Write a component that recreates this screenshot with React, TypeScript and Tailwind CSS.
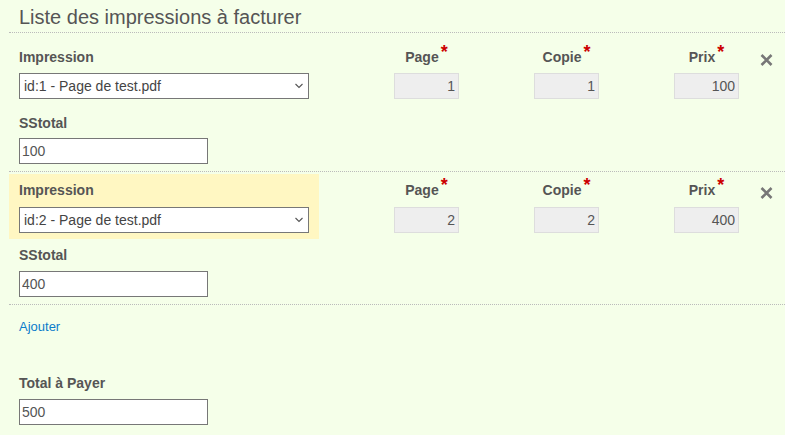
import type { ReactNode } from "react";

type Line = {
  id: number;
  page: number;
  copie: number;
  prix: number;
  highlight?: boolean;
};

const lines: Line[] = [
  { id: 1, page: 1, copie: 1, prix: 100 },
  { id: 2, page: 2, copie: 2, prix: 400, highlight: true },
];

function Label({ children }: { children: ReactNode }) {
  return (
    <div className="h-[18px] text-[14px] font-bold leading-[18px] text-[#555]">
      {children}
    </div>
  );
}

function Required({ label }: { label: string }) {
  return (
    <div className="flex h-[18px] items-start justify-center text-[14px] font-bold leading-[18px] text-[#555]">
      <span>{label}</span>
      <span className="ml-[2px] -mt-[5px] text-[18px] font-bold leading-[18px] text-[#c00]">*</span>
    </div>
  );
}

function TextInput({ value }: { value: string | number }) {
  return (
    <input
      readOnly
      value={value}
      className="block h-[26px] w-[189px] border border-[#777] bg-white px-[2px] text-[14px] text-[#555] outline-none"
    />
  );
}

function NumberCol({ label, value, first }: { label: string; value: number; first: boolean }) {
  return (
    <div className="flex w-[140px] justify-end">
      <div className="w-[65px] pt-[7px]">
        <Required label={label} />
        <input
          readOnly
          value={value}
          className={`block h-[26px] w-[65px] border border-[#ddd] bg-[#eee] px-[3px] text-right text-[14px] text-[#555] outline-none ${first ? "mt-[7px]" : "mt-[8px]"}`}
        />
      </div>
    </div>
  );
}

function Row({ line, first }: { line: Line; first: boolean }) {
  return (
    <div className="ml-[9px] border-b border-dotted border-[#bbb]">
      <div className={`flex items-start ${first ? "pt-[8px]" : "pt-[2px]"}`}>
        <div className={`w-[310px] px-[10px] pt-[7px] pb-[6px] ${line.highlight ? "bg-[#fff7c2]" : ""}`}>
          <Label>Impression</Label>
          <div className={`relative w-[290px] ${first ? "mt-[7px]" : "mt-[8px]"}`}>
            <select
              defaultValue={line.id}
              className="block h-[26px] w-[290px] appearance-none border border-[#777] bg-white pl-[4px] pr-[20px] text-[14px] text-[#444] outline-none"
            >
              <option value={line.id}>id:{line.id} - Page de test.pdf</option>
            </select>
            <svg
              className="pointer-events-none absolute right-[6px] top-[10px]"
              width="8"
              height="6"
              viewBox="0 0 8 6"
              fill="none"
            >
              <path d="M0.5 1 L4 4.5 L7.5 1" stroke="#555" strokeWidth="1.1" />
            </svg>
          </div>
        </div>
        <NumberCol label="Page" value={line.page} first={first} />
        <NumberCol label="Copie" value={line.copie} first={first} />
        <NumberCol label="Prix" value={line.prix} first={first} />
        <div className="ml-[21px] pt-[13px]">
          <svg width="13" height="12" viewBox="0 0 13 12">
            <path d="M1.5 1 L11.5 11 M11.5 1 L1.5 11" stroke="#777" strokeWidth="2.6" />
          </svg>
        </div>
      </div>
      <div className={`px-[10px] pb-[7px] ${first ? "pt-[9px]" : "pt-[7px]"}`}>
        <Label>SStotal</Label>
        <div className={first ? "mt-[6px]" : "mt-[7px]"}>
          <TextInput value={line.prix * 1} />
        </div>
      </div>
    </div>
  );
}

export default function App() {
  const total = lines.reduce((s, l) => s + l.prix, 0);
  return (
    <div className="min-h-screen bg-[#f5ffe9] font-['Liberation_Sans',Arial,sans-serif] text-[#555]">
      <div className="ml-[9px] border-b border-dotted border-[#bbb] pl-[10px] pt-[5px] pb-[3px]">
        <h2 className="text-[20px] font-normal leading-[24px] text-[#555]">
          Liste des impressions à facturer
        </h2>
      </div>
      {lines.map((l, i) => (
        <Row key={l.id} line={l} first={i === 0} />
      ))}
      <div className="px-[19px] pt-[13px]">
        <a href="#" className="block w-fit text-[13px] leading-[18px] text-[#0b7ccb]">
          Ajouter
        </a>
        <div className="mt-[38px]">
          <Label>Total à Payer</Label>
          <div className="mt-[7px]">
            <TextInput value={total} />
          </div>
        </div>
      </div>
    </div>
  );
}
